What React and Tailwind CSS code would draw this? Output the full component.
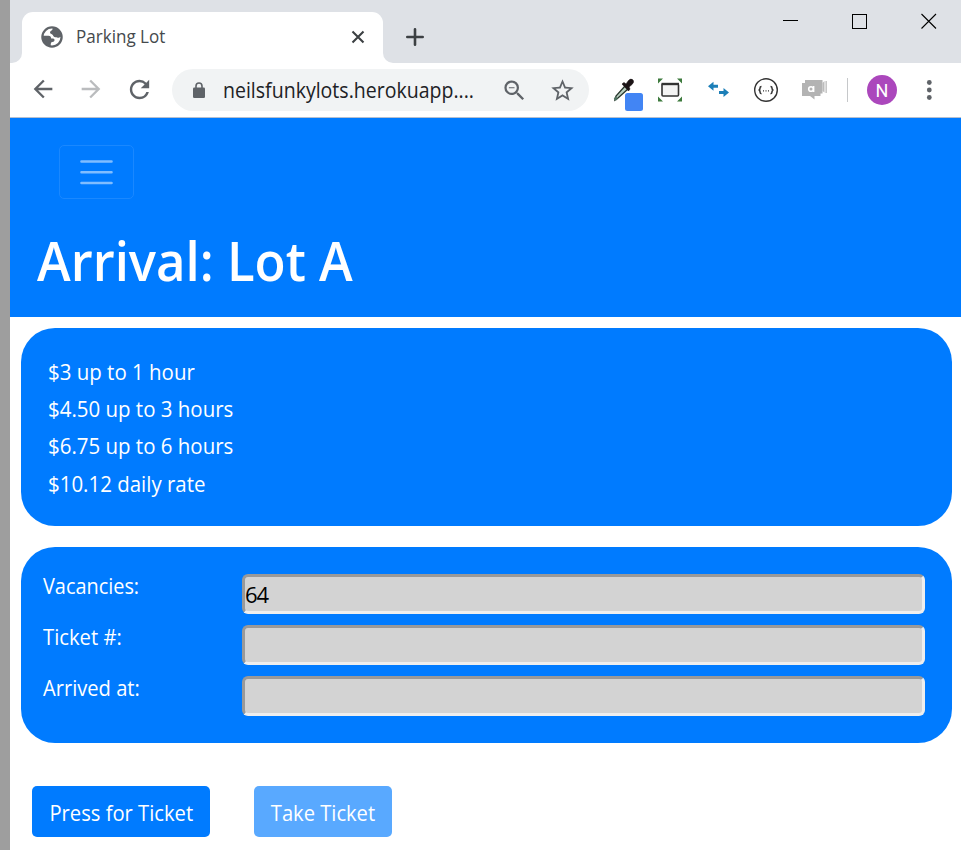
import React from "react";
import { MdArrowBack, MdArrowForward, MdRefresh, MdZoomOut, MdStarBorder } from "react-icons/md";

const rates = ["$3 up to 1 hour", "$4.50 up to 3 hours", "$6.75 up to 6 hours", "$10.12 daily rate"];

const fields = [
  { label: "Vacancies:", value: "64", squeeze: "scale-x-[0.904]" },
  { label: "Ticket #:", value: "", squeeze: "scale-x-[0.92]" },
  { label: "Arrived at:", value: "", squeeze: "scale-x-[0.915]" },
];

function Globe() {
  return (
    <svg width="22" height="22" viewBox="0 0 22 22" className="shrink-0">
      <circle cx="11" cy="11" r="9.6" fill="#fff" stroke="#5f6368" strokeWidth="2.3" />
      <path d="M11.500 1.500 C11.800 3 11.600 3.800 10.500 4.500 C9 5.400 8.700 6.200 9.300 7.300 C9.800 8.300 11.200 8 11.800 9 C12.300 10 12.800 11.200 14.500 11.300 C16.500 11.400 17 12.400 18.300 11.500 L20.500 10.500 C20.300 5.500 16.500 1.500 11.500 1.500 Z" fill="#5f6368" />
      <path d="M1.500 9.800 H7.500 C9.500 9.800 10 11 10.200 12.500 H12 C13.300 12.500 13.800 13.600 13.400 14.800 C13 16 11.500 15.800 10.500 16.300 C9.700 16.800 9.900 18.300 9.500 20.200 C5 19.600 1.500 15.500 1.500 9.800 Z" fill="#5f6368" />
    </svg>
  );
}

function TabStrip() {
  return (
    <div className="flex h-[63px] bg-[#dee1e6]">
      <div className="flex w-[12px] items-end bg-white">
        <div className="h-full w-full rounded-br-[10px] bg-[#dee1e6]" />
      </div>
      <div className="flex bg-[#dee1e6] pt-3">
        <div className="flex w-[361px] items-center rounded-t-[11px] bg-white pr-[18px] pb-[2px] pl-[19px]">
          <Globe />
          <span className="ml-[13px] inline-block origin-left scale-x-[0.947] pb-px text-[18px] leading-6 text-[#45494d]">Parking Lot</span>
          <svg className="ml-auto" width="14" height="14" viewBox="0 0 14 14" stroke="#3c4043" strokeWidth="2.1">
            <path d="M1.5 1.5 L12.5 12.5 M12.5 1.5 L1.5 12.5" />
          </svg>
        </div>
      </div>
      <div className="flex grow bg-white">
        <div className="flex grow rounded-bl-[10px] bg-[#dee1e6]">
          <svg className="mt-7 ml-[23px]" width="18" height="18" viewBox="0 0 18 18" stroke="#3c4043" strokeWidth="2.6" strokeLinecap="round">
            <path d="M9 1.3 V16.7 M1.3 9 H16.7" />
          </svg>
          <div className="mt-[13px] mr-[24px] ml-auto flex gap-[53px]">
            <svg width="16" height="17" viewBox="0 0 16 17"><path d="M0 7.5 H15" stroke="#000" /></svg>
            <svg width="16" height="17" viewBox="0 0 16 17"><rect x=".5" y="1.5" width="14" height="14" fill="none" stroke="#000" /></svg>
            <svg width="16" height="17" viewBox="0 0 16 17"><path d="M.5 1 L15 15.5 M15 1 L.5 15.5" stroke="#000" strokeWidth="1.1" /></svg>
          </div>
        </div>
      </div>
    </div>
  );
}

function Extensions() {
  return (
    <>
      <svg className="mt-[6px] ml-[23px] shrink-0" width="32" height="36" viewBox="612 75 32 36">
        <path d="M615 100 L616 96 L625 86 L628 89 L618 98 Z" fill="#b9cfc0" stroke="#26352b" strokeWidth="1.3" />
        <circle cx="615.7" cy="98.8" r="1.8" fill="#4f7261" />
        <path d="M622 84 L624 82.5 L626 84 L628.5 80.5 Q631 78 633 80 Q634.5 82 632 84.5 L629 87 L630 89 L628.5 91 Z" fill="#1c1416" stroke="#1c1416" strokeWidth=".6" />
        <rect x="625" y="93" width="18" height="18" rx="2.5" fill="#4285f4" />
      </svg>
      <svg className="mb-px ml-[14px] shrink-0" width="24" height="24" viewBox="0 0 24 24">
        <path d="M0 0.500 H5 L0 5.500 Z M24 0.500 V5.500 L19 0.500 Z M0 23.500 V18.500 L5 23.500 Z M24 23.500 H19 L24 18.500 Z" fill="#3d7a3d" />
        <rect x="4" y="6" width="16.500" height="12" rx="1" fill="#f4f4f4" stroke="#333" strokeWidth="1.6" />
        <path d="M3.500 6 H21" stroke="#333" strokeWidth="2.400" />
      </svg>
      <svg className="ml-[26px] shrink-0" width="22" height="18" viewBox="0 0 22 18">
        <path d="M0 5.300 L5.500 .8 V3.800 H10 V6.800 H5.500 V9.800 Z" fill="#1c7fb8" />
        <path d="M21 11.500 L15.500 7 V10 H11 V13 H15.500 V16 Z" fill="#1c7fb8" />
      </svg>
      <svg className="ml-[23px] shrink-0" width="26" height="26" viewBox="0 0 26 26" fill="none" stroke="#333">
        <circle cx="13" cy="13" r="11.300" strokeWidth="1.400" />
        <path d="M8.500 9.500 Q7 9.500 7 11 Q7 13 5.500 13 Q7 13 7 15 Q7 16.700 8.500 16.700 M17.500 9.500 Q19 9.500 19 11 Q19 13 20.500 13 Q19 13 19 15 Q19 16.700 17.500 16.700" strokeWidth="1.500" />
        <path d="M10 13.800 H11 M12.500 13.800 H13.500 M15 13.800 H16" strokeWidth="1.200" />
      </svg>
      <svg className="ml-[23px] shrink-0" width="26" height="22" viewBox="0 0 26 22">
        <path d="M0 4 H3 V1 H20.500 V14.500 H18.500 V17 H12.500 V20.500 L8 17 H0 Z" fill="#b3b3b3" />
        <path d="M20.500 4 L22.500 2 V13.500 L20.500 12 Z M23.500 2 H24.800 V14 H23.500 Z" fill="#bbb" />
        <circle cx="9" cy="10" r="2.300" fill="none" stroke="#fff" strokeWidth="1.600" />
        <path d="M11.700 7 V13" stroke="#fff" strokeWidth="1.400" />
      </svg>
    </>
  );
}

function Toolbar() {
  return (
    <div className="flex h-[55px] items-center border-b border-[#b5bfd0] bg-white">
      <MdArrowBack className="mb-[2px] ml-[19px] shrink-0 text-[28px] text-[#5f6368]" />
      <MdArrowForward className="mb-[2px] ml-5 shrink-0 text-[28px] text-[#babcbe]" />
      <MdRefresh className="mb-[2px] ml-5 shrink-0 text-[29px] text-[#5f6368]" />
      <div className="ml-[18px] flex h-[42px] w-[417px] shrink-0 items-center rounded-full bg-[#f1f3f4]">
        <svg className="ml-[21px] shrink-0" width="12" height="16" viewBox="0 0 12 16">
          <path d="M3 7 V4 Q3 1 6 1 Q9 1 9 4 V7" fill="none" stroke="#5f6368" strokeWidth="1.600" />
          <rect y="5.500" width="12" height="10.500" rx="1.300" fill="#5f6368" />
        </svg>
        <span className="mt-0.5 ml-[18px] inline-block w-[251px] origin-left scale-x-[0.93] text-[21px] whitespace-nowrap text-[#202124]">neilsfunkylots.herokuapp....</span>
        <MdZoomOut className="ml-[27px] shrink-0 text-[27px] text-[#5f6368]" />
        <MdStarBorder className="ml-[21px] shrink-0 text-[27px] text-[#5f6368]" />
      </div>
      <Extensions />
      <div className="ml-[19px] h-6 w-px shrink-0 bg-[#c6c8ca]" />
      <div className="ml-[19px] flex size-[30px] shrink-0 items-center justify-center rounded-full bg-[#ab47bc] font-['Roboto'] text-[18px] text-white">N</div>
      <svg className="mb-px ml-[29px] shrink-0" width="6" height="20" viewBox="0 0 6 20" fill="#5f6368">
        <circle cx="3.300" cy="2.500" r="2.400" /><circle cx="3.300" cy="10" r="2.400" /><circle cx="3.300" cy="17.500" r="2.400" />
      </svg>
    </div>
  );
}

export default function App() {
  return (
    <div className="flex h-[850px] w-[961px] overflow-hidden bg-white font-['Open_Sans','Noto_Sans',sans-serif]">
      <div className="w-[10px] shrink-0 bg-[#9e9e9e]" />
      <div className="flex w-[951px] flex-col">
        <TabStrip />
        <Toolbar />
        <header className="h-[199px] bg-[#007bff] pt-[27px]">
          <button className="ml-[49px] flex h-[54px] w-[75px] items-center justify-center rounded-[5px] border border-[#1a88ff]">
            <svg width="34" height="28" viewBox="0 0 34 28" stroke="#80bdff" strokeWidth="2.600" strokeLinecap="round">
              <path d="M1.500 3.500 H31.500 M1.500 14.300 H31.500 M1.500 25 H31.500" />
            </svg>
          </button>
          <h1 className="mt-[25px] ml-[27px] origin-left scale-x-[0.943] text-[54px] leading-[72px] font-semibold whitespace-nowrap text-white">Arrival: Lot A</h1>
        </header>
        <section className="mt-[11px] ml-[11px] h-[198px] w-[931px] rounded-[34px] bg-[#007bff] pt-[25px] pl-[27px]">
          {rates.map((rate) => (
            <p key={rate} className="h-[37.2px] origin-left scale-x-[0.93] text-[22px] leading-[37.2px] text-white">{rate}</p>
          ))}
        </section>
        <section className="mt-[21px] ml-[11px] flex h-[196px] w-[931px] flex-col gap-[11px] rounded-[34px] bg-[#007bff] pt-[27px] pr-[27px] pl-[22px]">
          {fields.map((f) => (
            <div key={f.label} className="flex h-10 justify-between">
              <label className={`origin-left text-[22px] leading-[22px] text-white ${f.squeeze}`}>{f.label}</label>
              <input readOnly value={f.value} className="h-10 w-[683px] rounded-[6px] border-[3px] border-t-[#999] border-r-[#eee] border-b-[#eee] border-l-[#999] bg-[#d3d3d3] text-[22px] tracking-[-1.2px] text-black" />
            </div>
          ))}
        </section>
        <div className="mt-[43px] ml-[22px] flex gap-[44px] text-[22px] text-white">
          <button className="flex h-[51px] w-[178px] items-center justify-center rounded-[5px] bg-[#007bff] pt-[2px] whitespace-nowrap">
            <span className="scale-x-[0.918]">Press for Ticket</span>
          </button>
          <button className="flex h-[51px] w-[138px] items-center justify-center rounded-[5px] bg-[#59a9ff] pt-[2px] whitespace-nowrap">
            <span className="scale-x-[0.915]">Take Ticket</span>
          </button>
        </div>
      </div>
    </div>
  );
}
